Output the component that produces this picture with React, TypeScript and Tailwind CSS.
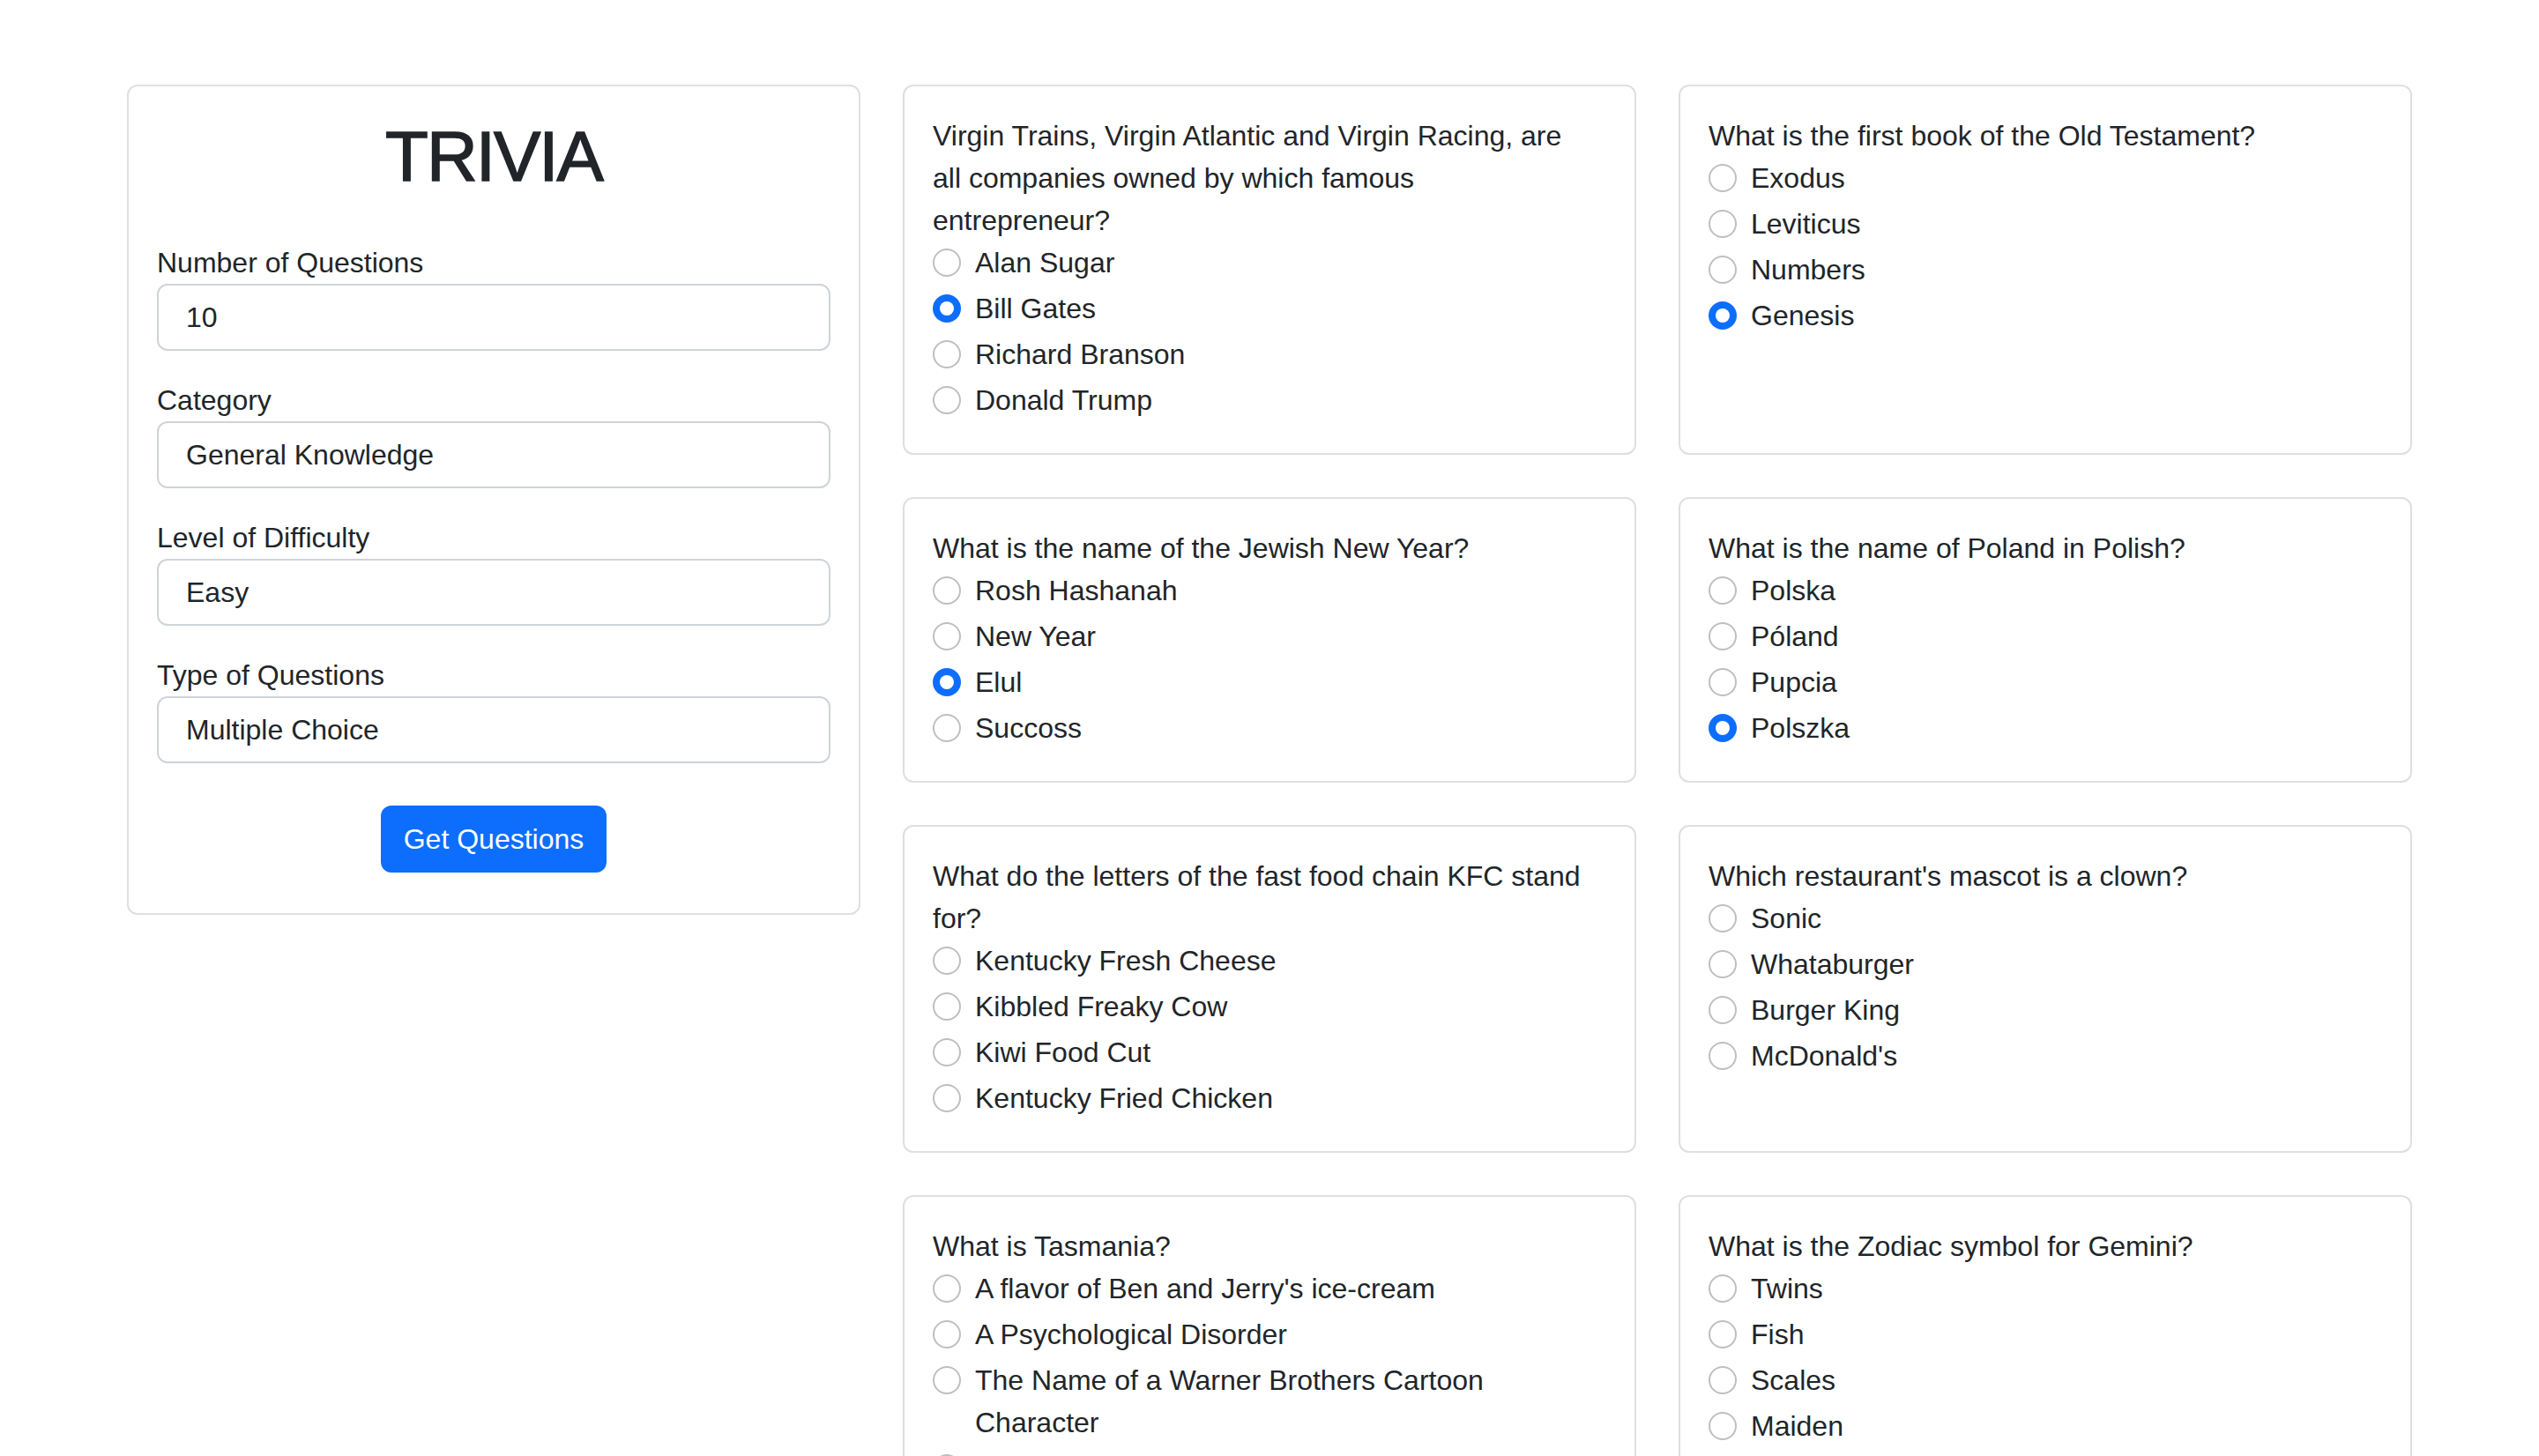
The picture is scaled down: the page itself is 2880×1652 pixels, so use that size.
import React from "react";

type Q = { q: string; options: string[]; checked: number };

const questions: Q[] = [
  {
    q: "Virgin Trains, Virgin Atlantic and Virgin Racing, are all companies owned by which famous entrepreneur?",
    options: ["Alan Sugar", "Bill Gates", "Richard Branson", "Donald Trump"],
    checked: 1,
  },
  {
    q: "What is the first book of the Old Testament?",
    options: ["Exodus", "Leviticus", "Numbers", "Genesis"],
    checked: 3,
  },
  {
    q: "What is the name of the Jewish New Year?",
    options: ["Rosh Hashanah", "New Year", "Elul", "Succoss"],
    checked: 2,
  },
  {
    q: "What is the name of Poland in Polish?",
    options: ["Polska", "P\u00f3land", "Pupcia", "Polszka"],
    checked: 3,
  },
  {
    q: "What do the letters of the fast food chain KFC stand for?",
    options: ["Kentucky Fresh Cheese", "Kibbled Freaky Cow", "Kiwi Food Cut", "Kentucky Fried Chicken"],
    checked: -1,
  },
  {
    q: "Which restaurant's mascot is a clown?",
    options: ["Sonic", "Whataburger", "Burger King", "McDonald's"],
    checked: -1,
  },
  {
    q: "What is Tasmania?",
    options: [
      "A flavor of Ben and Jerry's ice-cream",
      "A Psychological Disorder",
      "The Name of a Warner Brothers Cartoon Character",
      "An Australian State",
    ],
    checked: -1,
  },
  {
    q: "What is the Zodiac symbol for Gemini?",
    options: ["Twins", "Fish", "Scales", "Maiden"],
    checked: -1,
  },
];

function Radio({ checked }: { checked: boolean }) {
  if (checked) {
    return (
      <span className="mt-[8px] mr-[16px] flex h-[32px] w-[32px] shrink-0 items-center justify-center rounded-full bg-[#0d6efd]">
        <span className="h-[16px] w-[16px] rounded-full bg-white" />
      </span>
    );
  }
  return <span className="mt-[8px] mr-[16px] h-[32px] w-[32px] shrink-0 rounded-full border-2 border-[#bfbfbf] bg-white" />;
}

function QuestionCard({ item }: { item: Q }) {
  return (
    <div className="rounded-[12px] border-2 border-[#dfdfdf] bg-white p-[32px]">
      <div className="max-w-[745px]">{item.q}</div>
      {item.options.map((o, i) => (
        <div key={o} className="mb-[4px] flex">
          <Radio checked={i === item.checked} />
          <span className="flex-1">{o}</span>
        </div>
      ))}
    </div>
  );
}

function Field({ label, value }: { label: string; value: string }) {
  return (
    <div className="mb-[32px]">
      <div>{label}</div>
      <div className="flex h-[76px] items-center rounded-[12px] border-2 border-[#ced4da] bg-white pl-[31px]">
        {value}
      </div>
    </div>
  );
}

export default function App() {
  return (
    <div className="min-h-screen bg-white font-['Liberation_Sans',Arial,sans-serif] text-[32px] leading-[48px] text-[#212529]">
      <div className="grid grid-cols-[832px_1fr] gap-[48px] px-[144px] pt-[96px] pb-[96px]">
        <div className="self-start rounded-[12px] border-2 border-[#dfdfdf] bg-white px-[32px] pt-[32px] pb-[46px]">
          <h1 className="mb-[48px] text-center text-[80px] leading-[96px] font-normal tracking-[-2px] [-webkit-text-stroke:1.5px_#212529]">
            TRIVIA
          </h1>
          <Field label="Number of Questions" value="10" />
          <Field label="Category" value="General Knowledge" />
          <Field label="Level of Difficulty" value="Easy" />
          <Field label="Type of Questions" value="Multiple Choice" />
          <div className="mt-[48px] flex justify-center">
            <button className="h-[76px] rounded-[12px] bg-[#0d6efd] px-[26px] text-white">Get Questions</button>
          </div>
        </div>
        <div className="grid grid-cols-2 gap-[48px]">
          {questions.map((q) => (
            <QuestionCard key={q.q} item={q} />
          ))}
        </div>
      </div>
    </div>
  );
}
